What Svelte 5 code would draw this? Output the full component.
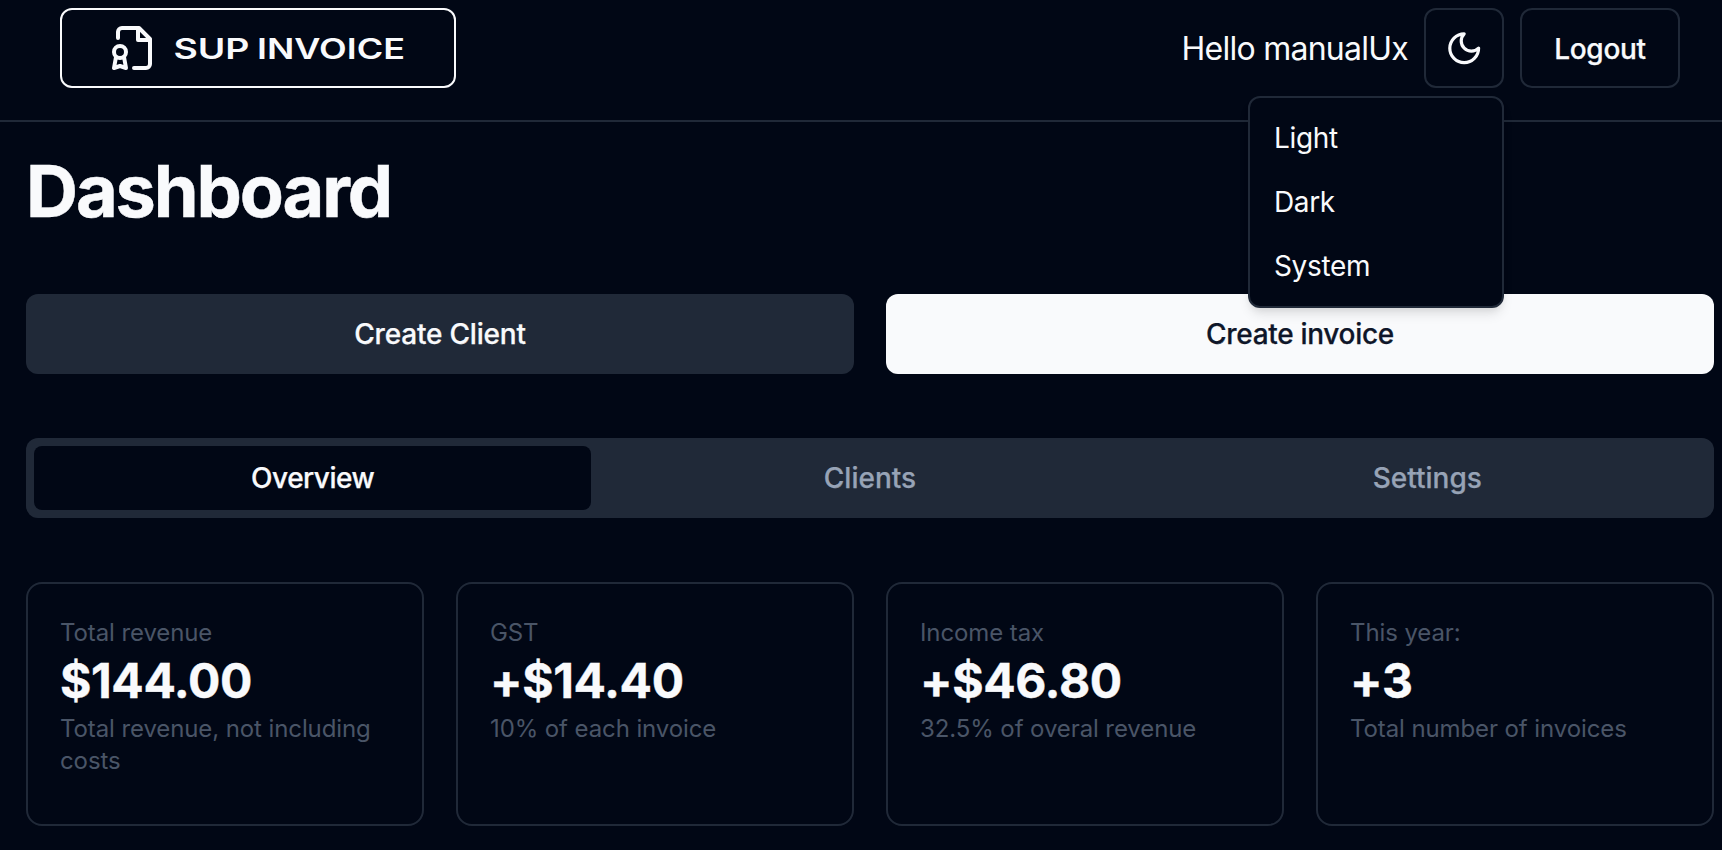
<script>
  const themes = ['Light', 'Dark', 'System'];
  const tabs = ['Overview', 'Clients', 'Settings'];
  let active = $state('Overview');
  const stats = [
    { label: 'Total revenue', value: '$144.00', note: 'Total revenue, not including costs' },
    { label: 'GST', value: '+$14.40', note: '10% of each invoice' },
    { label: 'Income tax', value: '+$46.80', note: '32.5% of overal revenue' },
    { label: 'This year:', value: '+3', note: 'Total number of invoices' }
  ];
</script>

<div class="page">
  <header>
    <a class="logo" href="#home">
      <svg class="badge" viewBox="0 0 24 24" fill="none" stroke="currentColor" stroke-width="2" stroke-linecap="round" stroke-linejoin="round">
        <path d="M4 7V4a2 2 0 0 1 2-2h8.5L20 7.5V20a2 2 0 0 1-2 2h-6" />
        <polyline points="14 2 14 8 20 8" />
        <path d="M5 17a3 3 0 1 0 0-6 3 3 0 0 0 0 6Z" />
        <path d="M7 16.5 8 22l-3-1-3 1 1-5.5" />
      </svg>
      <svg class="wordmark" width="232" height="40" viewBox="0 0 232 40">
        <text x="-0.5" y="30.5" textLength="76" lengthAdjust="spacingAndGlyphs">SUP</text>
        <text x="83" y="30.5" textLength="148" lengthAdjust="spacingAndGlyphs">INVOICE</text>
      </svg>
    </a>
    <div class="actions">
      <span class="hello">Hello manualUx</span>
      <div class="theme">
        <button class="outline icon" aria-label="Theme">
          <svg viewBox="0 0 24 24" fill="none" stroke="currentColor" stroke-width="2" stroke-linecap="round" stroke-linejoin="round">
            <path d="M12 3a6 6 0 0 0 9 9 9 9 0 1 1-9-9Z" />
          </svg>
        </button>
        <div class="menu">
          {#each themes as t}
            <div class="item">{t}</div>
          {/each}
        </div>
      </div>
      <button class="outline logout">Logout</button>
    </div>
  </header>

  <main>
    <h1>Dashboard</h1>
    <div class="create">
      <button class="secondary">Create Client</button>
      <button class="primary">Create invoice</button>
    </div>
    <div class="tabs">
      {#each tabs as t}
        <button class:active={active === t} onclick={() => (active = t)}>{t}</button>
      {/each}
    </div>
    <div class="cards">
      {#each stats as s}
        <section class="card">
          <p class="muted">{s.label}</p>
          <p class="value">{s.value}</p>
          <p class="muted">{s.note}</p>
        </section>
      {/each}
    </div>
  </main>
</div>

<style>
  :global(body) {
    background: #010715;
  }
  .page {
    box-sizing: border-box;
    height: 850px;
    overflow: hidden;
    background: #010715;
    color: #f9fafc;
    font-family: Inter, 'Liberation Sans', sans-serif;
    font-optical-sizing: none;
    font-size: 28px;
    line-height: 40px;
  }
  .page * {
    box-sizing: border-box;
  }
  button {
    font: inherit;
    font-weight: 500;
    letter-spacing: -0.2px;
    color: inherit;
    border: 0;
    border-radius: 12px;
    padding: 0;
    background: none;
    -webkit-text-stroke: 0.25px currentColor;
  }
  header {
    display: flex;
    justify-content: space-between;
    align-items: flex-start;
    height: 122px;
    padding: 8px 42px 0 60px;
    border-bottom: 2px solid #202938;
  }
  .logo {
    display: flex;
    align-items: center;
    gap: 16px;
    width: 396px;
    height: 80px;
    padding: 0 48px;
    border: 2px solid #f9fafc;
    border-radius: 12px;
    color: inherit;
    text-decoration: none;
  }
  .badge {
    width: 48px;
    height: 48px;
    flex: none;
  }
  .wordmark {
    flex: none;
    overflow: visible;
  }
  .wordmark text {
    fill: currentColor;
    font-size: 28px;
    font-weight: 600;
  }
  .actions {
    display: flex;
    align-items: center;
    gap: 16px;
  }
  .hello {
    padding-top: 2px;
    font-size: 32px;
    line-height: 48px;
    letter-spacing: -0.75px;
  }
  .theme {
    position: relative;
    height: 80px;
  }
  .outline {
    height: 80px;
    border: 2px solid #202938;
  }
  .icon {
    display: flex;
    align-items: center;
    justify-content: center;
    width: 80px;
  }
  .icon svg {
    width: 38.4px;
    height: 38.4px;
  }
  .logout {
    width: 160px;
    padding-top: 1px;
    letter-spacing: -0.3px;
  }
  .menu {
    position: absolute;
    z-index: 2;
    top: 88px;
    right: 0;
    width: 256px;
    padding: 8px;
    background: #010715;
    border: 2px solid #202938;
    border-radius: 12px;
    box-shadow: 0 8px 12px -2px rgba(0, 0, 0, 0.1), 0 4px 8px -4px rgba(0, 0, 0, 0.1);
  }
  .item {
    padding: 12px 16px;
    letter-spacing: -0.35px;
  }
  main {
    display: flex;
    flex-direction: column;
    padding: 32px 8px 0 26px;
  }
  h1 {
    margin: 0 0 66px;
    font-size: 72px;
    line-height: 74px;
    font-weight: 700;
    letter-spacing: -2.1px;
    -webkit-text-stroke: 0.5px currentColor;
  }
  .create {
    display: grid;
    grid-template-columns: 1fr 1fr;
    gap: 32px;
    margin-bottom: 64px;
  }
  .create button {
    height: 80px;
  }
  .secondary {
    background: #202938;
  }
  .primary {
    background: #f9fafc;
    color: #0f1629;
    letter-spacing: -0.3px;
  }
  .tabs {
    display: grid;
    grid-template-columns: repeat(3, 1fr);
    height: 80px;
    padding: 8px;
    margin-bottom: 64px;
    background: #202938;
    border-radius: 12px;
    color: #97a3b6;
  }
  .tabs button {
    border-radius: 8px;
    letter-spacing: 0;
  }
  .tabs .active {
    background: #010715;
    color: #f9fafc;
    letter-spacing: -0.5px;
  }
  .cards {
    display: grid;
    grid-template-columns: repeat(4, 1fr);
    gap: 32px;
  }
  .card {
    height: 244px;
    padding: 33px 32px 31px;
    border: 2px solid #202938;
    border-radius: 16px;
  }
  p {
    margin: 0;
  }
  .muted {
    font-size: 24px;
    line-height: 32px;
    letter-spacing: -0.1px;
    color: #4a5567;
  }
  .value {
    font-size: 48px;
    line-height: 64px;
    font-weight: 700;
    letter-spacing: -0.4px;
    -webkit-text-stroke: 0.4px currentColor;
  }
</style>
